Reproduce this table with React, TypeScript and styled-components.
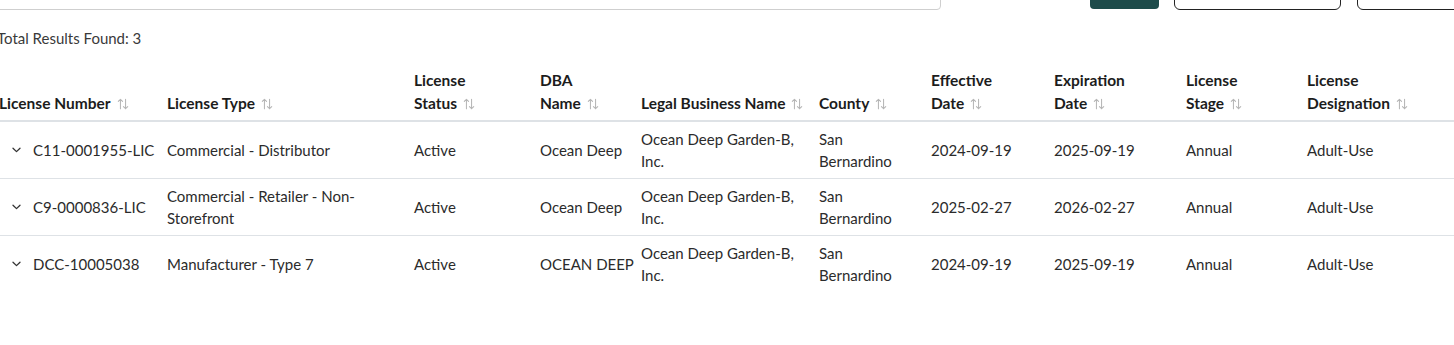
import React from "react";
import styled, { createGlobalStyle } from "styled-components";

type License = {
  number: string;
  type: string;
  status: string;
  dba: string;
  legal: string;
  county: string;
  effective: string;
  expiration: string;
  stage: string;
  designation: string;
};

const licenses: License[] = [
  { number: 'C11-0001955-LIC', type: 'Commercial - Distributor', status: 'Active', dba: 'Ocean Deep', legal: 'Ocean Deep Garden-B, Inc.', county: 'San Bernardino', effective: '2024-09-19', expiration: '2025-09-19', stage: 'Annual', designation: 'Adult-Use' },
  { number: 'C9-0000836-LIC', type: 'Commercial - Retailer - Non-Storefront', status: 'Active', dba: 'Ocean Deep', legal: 'Ocean Deep Garden-B, Inc.', county: 'San Bernardino', effective: '2025-02-27', expiration: '2026-02-27', stage: 'Annual', designation: 'Adult-Use' },
  { number: 'DCC-10005038', type: 'Manufacturer - Type 7', status: 'Active', dba: 'OCEAN DEEP', legal: 'Ocean Deep Garden-B, Inc.', county: 'San Bernardino', effective: '2024-09-19', expiration: '2025-09-19', stage: 'Annual', designation: 'Adult-Use' },
];

// header lines as they wrap in the narrow columns
const columns: { head: string[], width: number }[] = [
  { head: ['License Number'], width: 168 },
  { head: ['License Type'], width: 247 },
  { head: ['License', 'Status'], width: 126 },
  { head: ['DBA', 'Name'], width: 101 },
  { head: ['Legal Business Name'], width: 178 },
  { head: ['County'], width: 112 },
  { head: ['Effective', 'Date'], width: 123 },
  { head: ['Expiration', 'Date'], width: 132 },
  { head: ['License', 'Stage'], width: 121 },
  { head: ['License', 'Designation'], width: 172 },
];

const tableWidth = columns.reduce((acc, c) => acc + c.width, 0);

const SortIcon = () => (
  <SortSvg viewBox="0 0 14 14" fill="none" stroke="currentColor" strokeWidth="1.2" strokeLinecap="round" strokeLinejoin="round">
    <path d="M4 12.5V1.5M1.5 4L4 1.5L6.5 4" />
    <path d="M10 1.5V12.5M7.5 10L10 12.5L12.5 10" />
  </SortSvg>
);

const Chevron = () => (
  <svg width="9" height="6" viewBox="0 0 9 6" fill="none" stroke="#333" strokeWidth="1.3" strokeLinecap="round" strokeLinejoin="round">
    <path d="M1 1.2L4.5 4.6L8 1.2" />
  </svg>
);

const App = () => {
  return (
    <>
      <GlobalStyle />
      <Page>
        <Toolbar>
          <SearchBox />
          <PrimaryButton />
          <OutlineButton $width={165} $gap={15} />
          <OutlineButton $width={130} $gap={16}><Dot /></OutlineButton>
        </Toolbar>
        <Total>Total Results Found: {licenses.length}</Total>
        <Table style={{ width: tableWidth }}>
          <colgroup>
            {columns.map(c => <col key={c.head.join(' ')} style={{ width: c.width }} />)}
          </colgroup>
          <thead>
            <tr>
              {columns.map(c => (
                <Th key={c.head.join(' ')}>
                  {c.head.slice(0, -1).map(line => <HeadLine key={line}>{line}</HeadLine>)}
                  <HeadLine>{c.head[c.head.length - 1]}<SortIcon /></HeadLine>
                </Th>
              ))}
            </tr>
          </thead>
          <tbody>
            {licenses.map(l => (
              <Row key={l.number}>
                <Td $nowrap>
                  <NumberCell>
                    <Expander><Chevron /></Expander>
                    {l.number}
                  </NumberCell>
                </Td>
                <Td>{l.type}</Td>
                <Td>{l.status}</Td>
                <Td $nowrap>{l.dba}</Td>
                <Td>{l.legal}</Td>
                <Td>{l.county}</Td>
                <Td>{l.effective}</Td>
                <Td>{l.expiration}</Td>
                <Td>{l.stage}</Td>
                <Td>{l.designation}</Td>
              </Row>
            ))}
          </tbody>
        </Table>
      </Page>
    </>
  );
}

export default App;




const GlobalStyle = createGlobalStyle`
  html, body {
    margin: 0;
    padding: 0;
    background: #fff;
    overflow: hidden;
  }
  body {
    font-family: Lato, "Noto Sans", sans-serif;
    color: #2b2b2b;
  }
`
const Page = styled.div`
  width: 1520px;
  margin-left: -9px;
`
const Toolbar = styled.div`
  margin-top: -30px;
  display: flex;
  flex-direction: row;
  align-items: flex-end;

  > * {
    flex-shrink: 0;
  }
`
const SearchBox = styled.div`
  width: 943px;
  height: 38px;
  margin-left: 5px;
  border: 1px solid #cfcfcf;
  border-radius: 4px;
`
const PrimaryButton = styled.div`
  width: 69px;
  height: 39px;
  margin-left: 149px;
  margin-bottom: 1px;
  background: #1d4b4a;
  border-radius: 4px;
`
const OutlineButton = styled.div<{ $width: number, $gap: number }>`
  position: relative;
  width: ${p => p.$width}px;
  height: 38px;
  margin-left: ${p => p.$gap}px;
  border: 1px solid #222;
  border-radius: 6px;
`
const Dot = styled.span`
  position: absolute;
  right: 37px;
  bottom: 29px;
  width: 12px;
  height: 3px;
  background: #9cc3e6;
`
const Total = styled.div`
  margin: 17px 0 0 6px;
  font-size: 15px;
  line-height: 22px;
  color: #3a3a3a;
`
const Table = styled.table`
  margin-top: 14px;
  table-layout: fixed;
  border-collapse: collapse;
  border-spacing: 0;
`
const Th = styled.th`
  padding: 6px 0 5px 8px;
  text-align: left;
  vertical-align: bottom;
  font-size: 15.5px;
  line-height: 23px;
  font-weight: 700;
  color: #1c1c1c;
  border-bottom: 2px solid #dee2e6;
`
const HeadLine = styled.div`
  white-space: nowrap;
`
const SortSvg = styled.svg`
  width: 12px;
  height: 12px;
  margin-left: 6px;
  color: #b5b5b5;
  vertical-align: -1px;
`
const Row = styled.tr`
  border-bottom: 1px solid #dee2e6;

  &:last-child {
    border-bottom: none;
  }
`
const Td = styled.td<{ $nowrap?: boolean }>`
  padding: 6px 8px;
  height: 44px;
  font-size: 15px;
  line-height: 22px;
  color: #2b2b2b;
  vertical-align: middle;
  white-space: ${p => p.$nowrap ? 'nowrap' : 'normal'};
`
const NumberCell = styled.div`
  display: flex;
  flex-direction: row;
  align-items: center;
`
const Expander = styled.span`
  flex-shrink: 0;
  width: 34px;
  display: flex;
  justify-content: center;
  align-items: center;
`
